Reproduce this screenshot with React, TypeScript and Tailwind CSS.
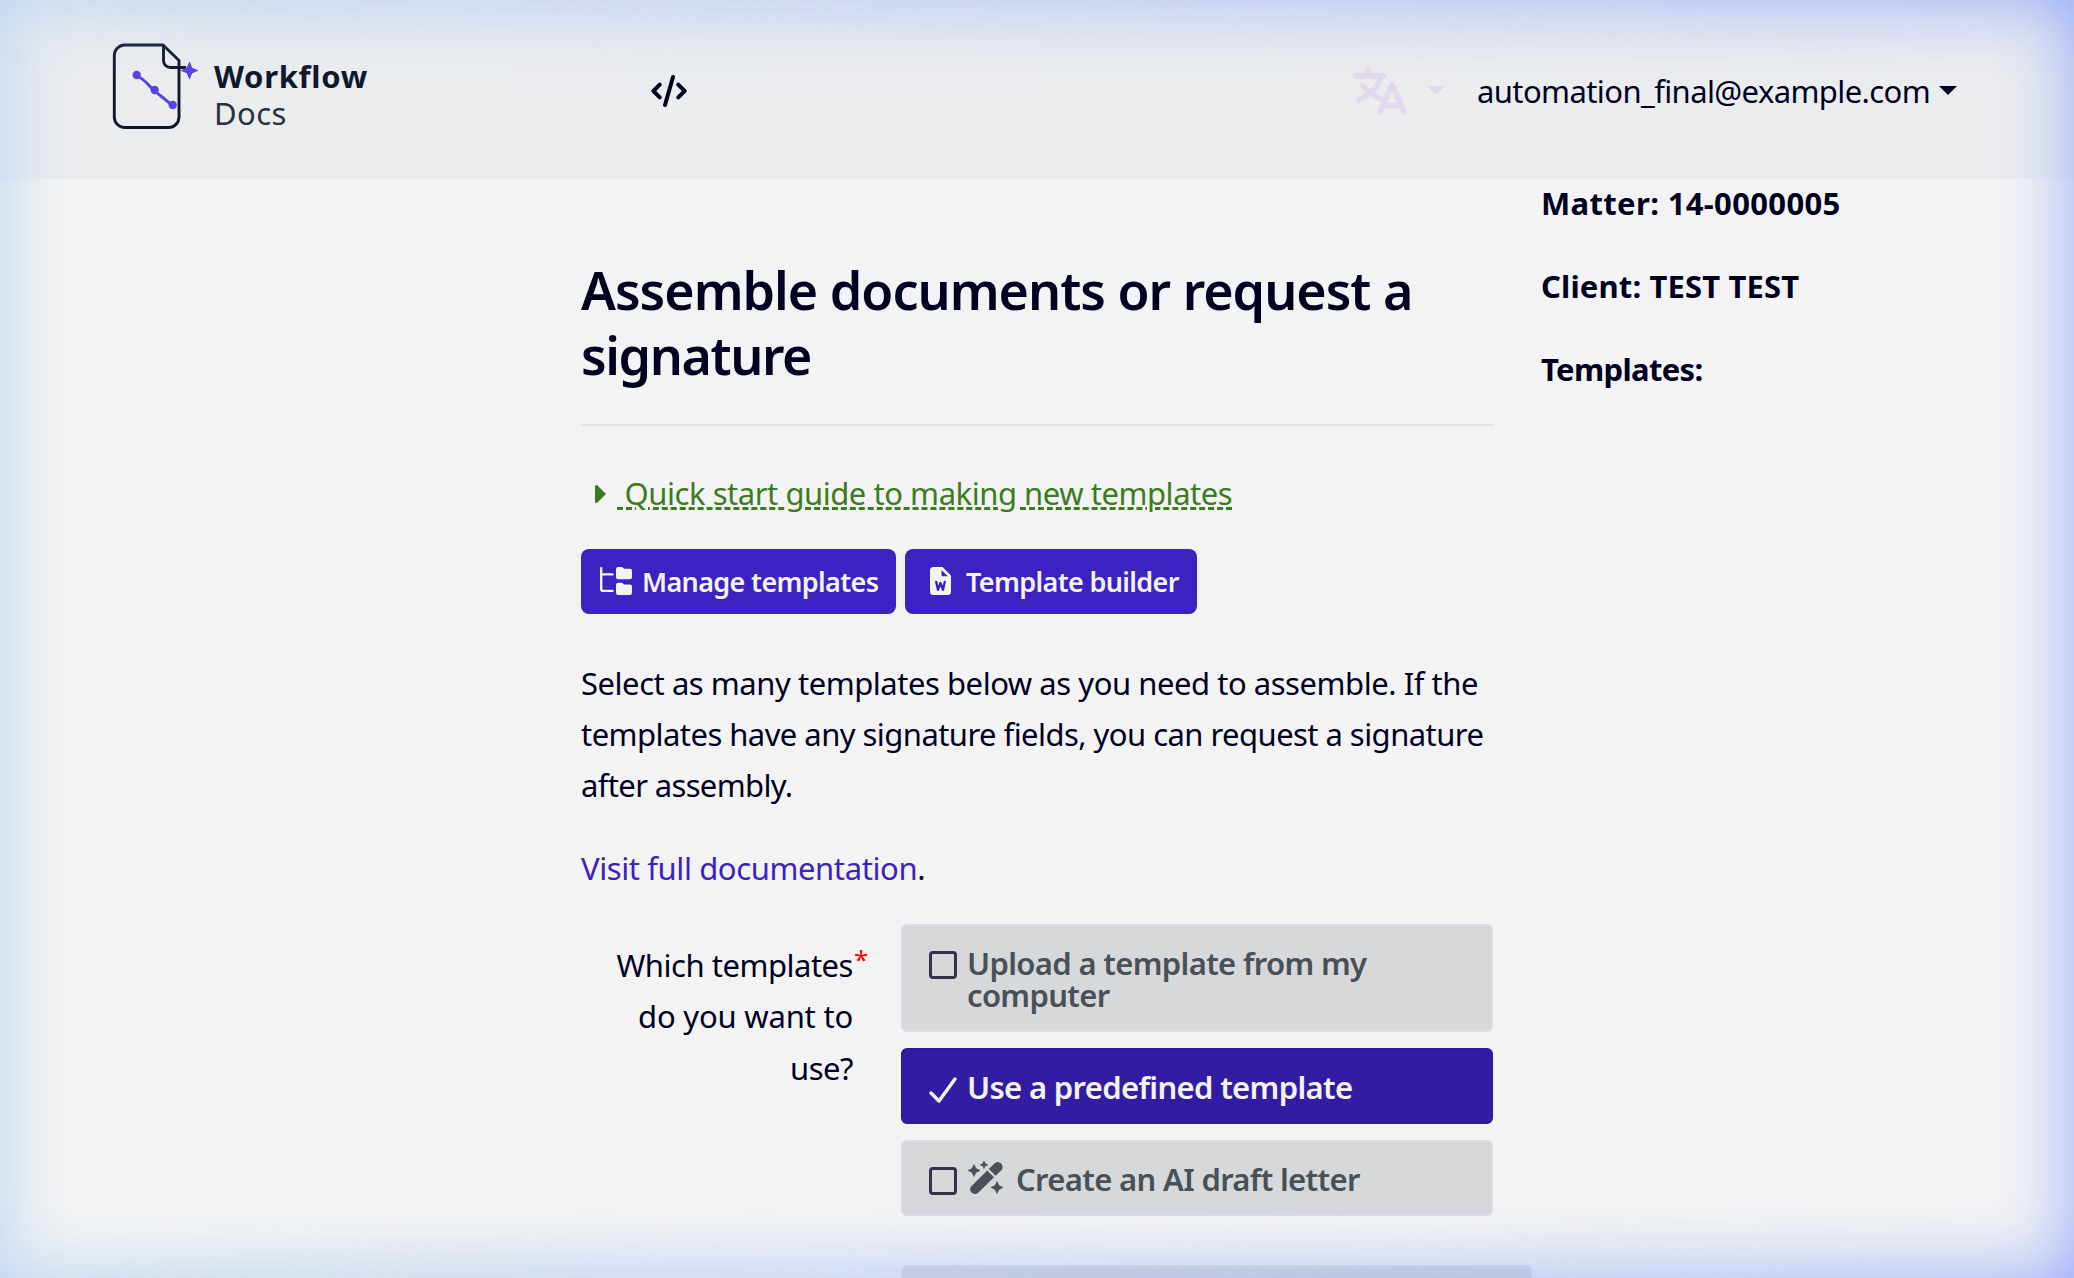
import type { ReactNode } from "react";

function Logo() {
  return (
    <svg className="h-[92px] w-[92px] shrink-0" viewBox="0 -0.5 92 92" fill="none" strokeLinejoin="round" strokeLinecap="round">
      <path d="M52 4.500H14A10.500 10.500 0 0 0 3.300 15V76.500A10.500 10.500 0 0 0 14 87H57A10.500 10.500 0 0 0 68 76.500V20Z" stroke="#0f172a" strokeWidth="2.9" />
      <path d="M52.500 5V20A7 7 0 0 0 59.500 27H74" stroke="#0f172a" strokeWidth="2.900" />
      <path d="M25 35C35 39 37 45 43 50S56 60 61 65" stroke="#5843e0" strokeWidth="2.9" />
      <circle cx="25.700" cy="34.500" r="4.200" fill="#5843e0" />
      <circle cx="43.700" cy="49.500" r="4.200" fill="#5843e0" />
      <circle cx="61.700" cy="64.500" r="4.200" fill="#5843e0" />
      <path d="M78.500 20.800L81.200 27.300L87.700 30L81.200 32.700L78.500 39.200L75.800 32.700L69.300 30L75.800 27.300Z" fill="#5843e0" />
    </svg>
  );
}

function CodeIcon() {
  return (
    <svg className="h-[32px] w-[36px]" viewBox="0 0 36 32" fill="none" stroke="#00001f" strokeWidth="4" strokeLinecap="round" strokeLinejoin="round">
      <path d="M8.700 9.700L2.400 16L8.700 22.300M22 2L14 30M27.300 9.700L33.600 16L27.300 22.300" />
    </svg>
  );
}

function TranslateIcon() {
  return (
    <svg className="h-[48px] w-[54px]" viewBox="0 0 54 48" fill="none" stroke="#e2daec" strokeWidth="5.6" strokeLinecap="round" strokeLinejoin="round">
      <path d="M2.800 8.700H30.300M15 2.800V8.700M28 9Q24 25 6 33M10 19Q16 28 30 32.500" />
      <path d="M27 45.200L39 18L51.200 45.200M31 38.800H47" />
    </svg>
  );
}

function FolderTreeIcon() {
  return (
    <svg className="h-[28px] w-[32px] shrink-0" viewBox="0 0 32 28">
      <path d="M1.200 1.200V22Q1.200 23.900 3.100 23.900H12.500M1.200 7.400H12.500" fill="none" stroke="#f3f3f3" strokeWidth="2.400" strokeLinecap="round" />
      <path id="folder" d="M16 2Q16 0 18 0H21.500Q22.500 0 23.200 .9T25 1.800H30Q32 1.800 32 3.800V10Q32 12.200 30 12.200H18Q16 12.200 16 10Z" fill="#f3f3f3" />
      <use href="#folder" y="15.800" />
    </svg>
  );
}

function FileWordIcon() {
  return (
    <svg className="h-[28px] w-[21px] shrink-0" viewBox="0 0 21 28">
      <path d="M3.500 0H12.500L21 8.500V24.500Q21 28 17.500 28H3.500Q0 28 0 24.500V3.500Q0 0 3.500 0Z" fill="#f3f3f3" />
      <path d="M11.500 3V8Q11.500 9.300 12.800 9.300H17.800Z" fill="#3d21c1" />
      <path d="M6.200 14.800L8 22.800L10.500 16L13 22.800L14.800 14.800" fill="none" stroke="#3d21c1" strokeWidth="2.300" strokeLinecap="round" strokeLinejoin="round" />
    </svg>
  );
}

function WandIcon() {
  return (
    <svg className="ml-px mr-[12px] mt-[-2px] h-[34px] w-[36px] shrink-0" viewBox="0 0 36 34" fill="#495057">
      <path d="M6 3.500L8 7.600L12 9.500L8 11.400L6 15.500L4 11.400L0 9.500L4 7.600Z" stroke="#495057" strokeWidth=".6" strokeLinejoin="round" />
      <path d="M16 0L17.300 2.600L20 3.800L17.300 5L16 7.600L14.700 5L12 3.800L14.700 2.600Z" stroke="#495057" strokeWidth=".5" strokeLinejoin="round" />
      <path d="M29 20.500L31 24.600L35 26.500L31 28.400L29 32.500L27 28.400L23 26.500L27 24.600Z" stroke="#495057" strokeWidth=".6" strokeLinejoin="round" />
      <path d="M20.800 8L26.800 2.200Q30.300 -.2 33.100 2.600Q35.900 5.500 33.600 8.900L27.600 14.800Z" />
      <path d="M19.300 9.600L26 16.300L10.500 31.600Q7 34.600 3.600 31.600Q.8 28.400 3.500 25.100Z" />
    </svg>
  );
}

function Header() {
  return (
    <header className="flex h-[179px] items-start bg-[#ebecee]">
      <div className="ml-[111px] mt-[40px] flex w-[540px]">
        <Logo />
        <div className="ml-[11px] mt-[18px] text-[31px] leading-[37px]">
          <div className="font-bold tracking-[0.7px] text-[#0f172a]">Workflow</div>
          <div className="tracking-[0.4px] text-[#2a3042]">Docs</div>
        </div>
      </div>
      <div className="mt-[75px]">
        <CodeIcon />
      </div>
      <div className="ml-auto mr-[117px] mt-[67px] flex items-start">
        <TranslateIcon />
        <svg className="ml-[20px] mt-[19px] h-[9px] w-[18px]" viewBox="0 0 18 9">
          <path d="M0 0H18L9 9Z" fill="#e2daec" />
        </svg>
        <span className="ml-[32px] mt-[-1px] w-[462px] whitespace-nowrap text-[31px] leading-[50px] tracking-[-0.6px]">automation_final@example.com</span>
        <svg className="mt-[19px] h-[9px] w-[18px]" viewBox="0 0 18 9">
          <path d="M0 0H18L9 9Z" fill="#00001f" />
        </svg>
      </div>
    </header>
  );
}

function Option({ checked, children }: { checked?: boolean; children: ReactNode }) {
  return (
    <div
      className={
        checked
          ? "flex rounded-[6px] border-2 border-[#2f1999] bg-[#331ca3] px-[26px] pb-[19px] pt-[21px] text-[#f3f3f3]"
          : "flex rounded-[6px] border-2 border-[#dfd9ea] bg-[#d7d8da] px-[26px] pb-[19px] pt-[21px] text-[#495057]"
      }
    >
      {checked ? (
        <svg className="mt-[4px] h-[28px] w-[28px] shrink-0" viewBox="0 0 28 28" fill="none" stroke="#f3f3f3" strokeWidth="3.4" strokeLinecap="round" strokeLinejoin="round">
          <path d="M2 18L10 26L26 4" />
        </svg>
      ) : (
        <span className="mt-[4px] h-[28px] w-[28px] shrink-0 rounded-[4px] border-[3px] border-[#37304b]" />
      )}
      <div className="ml-[10px] whitespace-nowrap text-[31px] font-semibold leading-[32px] tracking-[-0.66px]">{children}</div>
    </div>
  );
}

export default function App() {
  return (
    <div className="relative h-[1278px] w-[2074px] overflow-hidden bg-[#f3f3f3] font-['Noto_Sans',sans-serif] text-[31px] leading-[51.2px] tracking-[-0.48px] text-[#00001f]">
      <Header />
      <div className="flex">
        <main className="ml-[581px] w-[912px] shrink-0 whitespace-nowrap">
          <h1 className="mt-[78px] text-[52px] font-semibold leading-[65px] tracking-[-1px]">
            Assemble documents or request a
            <br />
            <span className="tracking-[-1.4px]">signature</span>
          </h1>
          <hr className="mt-[37px] border-t-2 border-[#e0e0e1]" />
          <div className="mt-[42px] flex h-[51px] text-[#3a7d1c]">
            <svg className="ml-[14px] mt-[17px] h-[18px] w-[11px]" viewBox="0 0 11 18">
              <path d="M0 1Q0 0 2 0L11 9L2 18Q0 18 0 17Z" fill="#3a7d1c" />
            </svg>
            <a className="ml-[11px] whitespace-pre underline decoration-dashed decoration-[3px] tracking-[-0.46px]"> Quick start guide to making new templates</a>
          </div>
          <div className="mt-[30px] flex gap-[9px] text-[27px] font-semibold tracking-[-0.65px] text-[#f3f3f3]">
            <a className="flex h-[65px] w-[315px] items-center rounded-[8px] bg-[#3d21c1] pb-px pl-[19px]">
              <FolderTreeIcon />
              <span className="ml-[10px] mt-px">Manage templates</span>
            </a>
            <a className="flex h-[65px] w-[292px] items-center rounded-[8px] bg-[#3d21c1] pb-px pl-[25px]">
              <FileWordIcon />
              <span className="ml-[15px] mt-px">Template builder</span>
            </a>
          </div>
          <p className="mt-[44px]">
            <span className="tracking-[-0.46px]">Select as many templates below as you need to assemble. If the</span>
            <br />
            <span className="tracking-[-0.55px]">templates have any signature fields, you can request a signature</span>
            <br />
            <span className="tracking-[-0.65px]">after assembly.</span>
          </p>
          <p className="mt-[31px] tracking-[-0.4px]">
            <a className="text-[#3d21c1]">Visit full documentation</a>.
          </p>
          <div className="mt-[30px] flex">
            <div className="mt-[16px] w-[272px] text-right leading-[51.5px]">
              Which templates
              <br />
              <span className="tracking-[-0.2px]">do you want to</span>
              <br />
              use?
            </div>
            <span className="mt-[10px] w-[48px] pl-[1px] text-[26px] text-[#ff0000]">*</span>
            <div className="flex w-[592px] flex-col gap-[16px]">
              <Option>
                Upload a template from my
                <br />
                computer
              </Option>
              <Option checked>Use a predefined template</Option>
              <Option>
                <span className="flex">
                  <WandIcon />
                  Create an AI draft letter
                </span>
              </Option>
              <div className="mt-[33px] h-[76px] w-[631px] rounded-[6px] border-2 border-[#dfd9ea] bg-[#d7d8da]" />
            </div>
          </div>
        </main>
        <aside className="ml-[48px] mt-[-1px] whitespace-nowrap font-bold">
          <p className="tracking-[0.35px]">Matter: 14-0000005</p>
          <p className="mt-[32px] tracking-[0.15px]">Client: TEST TEST</p>
          <p className="mt-[32px] tracking-[-0.65px]">Templates:</p>
        </aside>
      </div>
      {/* coloured glow round the page */}
      <div className="pointer-events-none absolute inset-0 mask-r-from-0% mask-r-to-100% shadow-[inset_0_0_74px_#b8d2f0]" />
      <div className="pointer-events-none absolute inset-0 mask-l-from-0% mask-l-to-100% shadow-[inset_0_0_74px_#93a7fb]" />
    </div>
  );
}
